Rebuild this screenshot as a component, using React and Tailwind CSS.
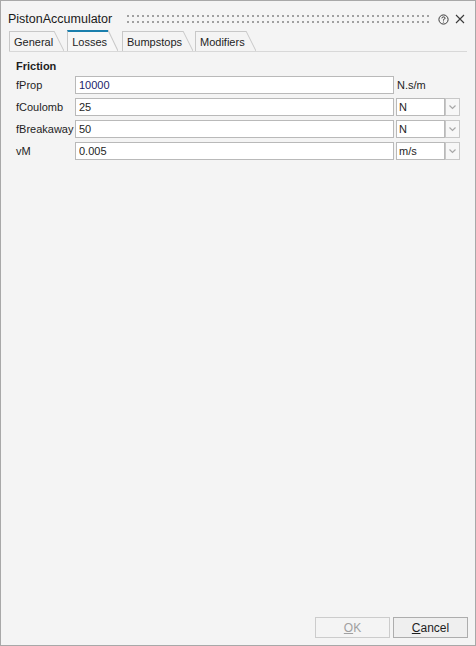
import React from "react";

function Tab({ label, active }) {
  return (
    <div className={`relative flex items-end ${active ? "h-[21px]" : "h-[20px]"}`}>
      <div
        className={`flex h-full items-center border-l border-t pl-[4px] pr-[1px] ${
          active ? "border-l-[#c8c8c8] border-t-2 border-t-[#1a7fad] bg-[#f7f7f7]" : "border-[#c8c8c8] bg-[#f4f4f4]"
        }`}
      >
        <span className="pt-[1px]">{label}</span>
      </div>
      <svg width="10" viewBox="0 0 10 20" preserveAspectRatio="none" className="h-full">
        <polygon points="0,0 10,20 0,20" fill={active ? "#f7f7f7" : "#f4f4f4"} />
        <line x1="0" y1="0" x2="10" y2="20" stroke="#c8c8c8" strokeWidth="1" />
      </svg>
    </div>
  );
}

function Row({ label, value, unit, combo, valueColor }) {
  return (
    <div className="flex h-[18px] items-center">
      <div className="w-[59px] shrink-0 whitespace-nowrap">{label}</div>
      <input
        readOnly
        value={value}
        className={`h-[18px] w-[319px] border border-[#b9b9b9] bg-white px-[3px] outline-none ${valueColor || "text-[#1e1e1e]"}`}
      />
      {combo ? (
        <div className="ml-[2px] flex h-[18px]">
          <div className="flex w-[49px] items-center border border-[#b9b9b9] bg-white px-[2px]">{unit}</div>
          <div className="flex w-[15px] items-center justify-center border border-[#c8c8c8] bg-[#f7f7f7]">
            <svg width="7" height="5" viewBox="0 0 7 5">
              <path d="M0.5 0.5 L3.5 3.5 L6.5 0.5" fill="none" stroke="#a8a8a8" strokeWidth="1.2" />
            </svg>
          </div>
        </div>
      ) : (
        <div className="ml-[3px]">{unit}</div>
      )}
    </div>
  );
}

export default function App() {
  return (
    <div
      className="flex h-[646px] w-[476px] flex-col border border-[#a8a8a8] bg-[#f4f4f4] text-[11px] text-[#1e1e1e]"
      style={{ fontFamily: '"Liberation Sans", Arial, sans-serif' }}
    >
      {/* title bar */}
      <div className="flex h-[29px] items-center pl-[7px] pr-[10px] pt-[7px]">
        <span className="text-[12.5px] text-[#1a1a1a]">PistonAccumulator</span>
        <div className="ml-[15px] mr-[8px] flex h-[8px] flex-1 flex-col justify-between">
          <div className="h-[2px] w-full bg-[linear-gradient(90deg,#a0a0a0_2px,transparent_2px)] bg-[length:5px_2px]" />
          <div className="h-[2px] w-full bg-[linear-gradient(90deg,#a0a0a0_2px,transparent_2px)] bg-[length:5px_2px]" />
        </div>
        <svg width="11" height="11" viewBox="0 0 11 11" className="mr-[6px]">
          <circle cx="5.5" cy="5.5" r="4.6" fill="none" stroke="#3a3a3a" strokeWidth="1" />
          <path d="M3.9 4.3 Q3.9 2.9 5.5 2.9 Q7.1 2.9 7.1 4.2 Q7.1 5 5.5 5.6 L5.5 6.6" fill="none" stroke="#3a3a3a" strokeWidth="1" />
          <circle cx="5.5" cy="8" r="0.6" fill="#3a3a3a" />
        </svg>
        <svg width="10" height="10" viewBox="0 0 10 10">
          <path d="M1 1 L9 9 M9 1 L1 9" stroke="#3a3a3a" strokeWidth="1.1" />
        </svg>
      </div>

      {/* tabs */}
      <div className="mx-[8px] flex items-end border-b border-[#d8d8d8] pr-[8px]">
        <Tab label="General" />
        <div className="w-[3px]" />
        <Tab label="Losses" active />
        <div className="w-[4px]" />
        <Tab label="Bumpstops" />
        <div className="w-[2px]" />
        <Tab label="Modifiers" />
      </div>

      {/* content */}
      <div className="flex flex-col gap-[4px] pl-[15px] pt-[7px]">
        <div className="mb-[-1px] h-[14px] font-bold leading-[14px]">Friction</div>
        <Row label="fProp" value="10000" unit="N.s/m" valueColor="text-[#1c236b]" />
        <Row label="fCoulomb" value="25" unit="N" combo />
        <Row label="fBreakaway" value="50" unit="N" combo />
        <Row label="vM" value="0.005" unit="m/s" combo />
      </div>

      <div className="flex-1" />

      {/* buttons */}
      <div className="flex justify-end gap-[3px] pb-[7px] pr-[7px]">
        <button className="h-[21px] w-[75px] border border-[#cccccc] bg-[#f4f4f4] text-[12px] text-[#a0a0a0]">
          <span className="underline">O</span>K
        </button>
        <button className="h-[21px] w-[75px] border border-[#adadad] bg-[#efefef] text-[12px] text-[#1e1e1e]">
          <span className="underline">C</span>ancel
        </button>
      </div>
    </div>
  );
}
